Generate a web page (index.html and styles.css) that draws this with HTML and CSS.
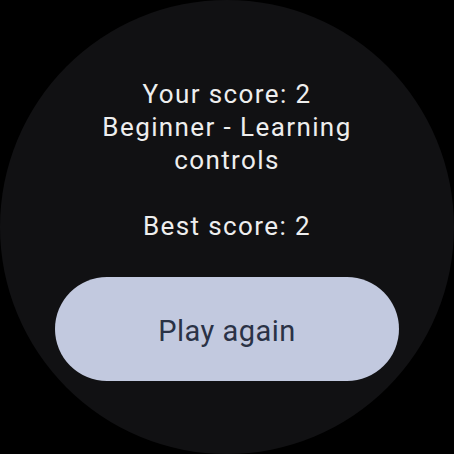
FILE: index.html
```html
<!DOCTYPE html>
<html>
<head>
<meta charset="utf-8">
<link rel="stylesheet" href="styles.css">
</head>
<body>
<div class="watch">
  <div class="result">
    <div>Your score: 2</div>
    <div>Beginner - Learning</div>
    <div>controls</div>
    <div class="blank">&nbsp;</div>
    <div>Best score: 2</div>
  </div>
  <button class="play">Play again</button>
</div>
</body>
</html>
```
FILE: styles.css
```css
html, body {
  margin: 0;
  padding: 0;
  background: #000;
}
.watch {
  width: 454px;
  height: 454px;
  border-radius: 50%;
  background: #111113;
  display: flex;
  flex-direction: column;
  align-items: center;
  box-sizing: border-box;
  padding-top: 78px;
  font-family: Roboto, "Noto Sans", sans-serif;
}
.result {
  color: #eeeeee;
  font-size: 26px;
  line-height: 33px;
  text-align: center;
  letter-spacing: 1.4px;
}
.play {
  margin-top: 34px;
  width: 344px;
  height: 104px;
  border: none;
  border-radius: 52px;
  background: #c2c9df;
  color: #2a3246;
  font-family: Roboto, "Noto Sans", sans-serif;
  font-size: 29px;
  letter-spacing: 0.5px;
  padding: 4px 0 0 0;
}
```
